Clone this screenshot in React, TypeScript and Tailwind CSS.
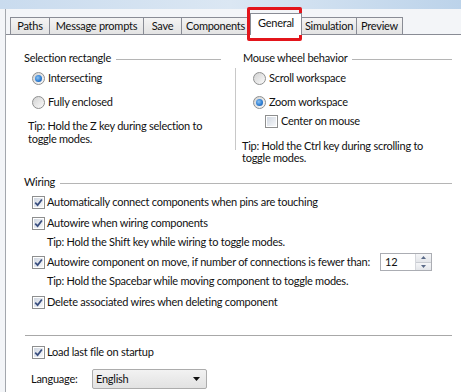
import React from 'react';

const Check = ({ checked }: { checked: boolean }) => (
  <span className="w-[13px] h-[13px] shrink-0 border border-[#8e8f8f] bg-white p-px flex">
    <span className="flex-1 bg-linear-to-br from-[#d0d7e1] to-[#f7f8fa] flex items-center justify-center">
      {checked && (
        <svg width="9" height="9" viewBox="0 0 9 9">
          <path d="M1.2 4.6 L3.6 7.1 L7.9 1.4" fill="none" stroke="#3a4f80" strokeWidth="1.7" />
        </svg>
      )}
    </span>
  </span>
);

const Radio = ({ on }: { on: boolean }) => (
  <span className="w-[13px] h-[13px] shrink-0 rounded-full border border-[#8e8f8f] bg-linear-to-br from-[#d2d2d2] to-[#fbfbfb] flex items-center justify-center">
    {on && <span className="w-[7px] h-[7px] rounded-full bg-[radial-gradient(circle_at_40%_40%,#8fc4f2,#2f7fd4_55%,#1a4f9a)]" />}
  </span>
);

const GroupHeader = ({ label, pl = '' }: { label: string; pl?: string }) => (
  <div className={`flex items-center h-[15px] whitespace-nowrap ${pl}`}>
    <span>{label}</span>
    <span className="flex-1 h-px bg-[#b5b5b5] ml-[5px] mt-[2px]" />
  </div>
);

const Row = ({ children, className = '' }: { children: React.ReactNode; className?: string }) => (
  <div className={`flex items-center h-[15px] whitespace-nowrap ${className}`}>{children}</div>
);

const tabs = [
  { label: 'Paths', w: 'w-[39px]' },
  { label: 'Message prompts', w: 'w-[94px]' },
  { label: 'Save', w: 'w-[38px]' },
  { label: 'Components', w: 'w-[69px]' },
];

const tabsAfter = [
  { label: 'Simulation', w: 'w-[55px]' },
  { label: 'Preview', w: 'w-[46px]' },
];

export default function App() {
  return (
    <div className="relative w-[461px] h-[392px] overflow-hidden bg-[#f3f5f8] text-[#111] text-[11px] tracking-[-0.25px] font-['Lato','Noto_Sans',sans-serif] flex flex-col">
      {/* window chrome */}
      <div className="h-[9px] shrink-0 bg-linear-to-r from-[#c9dbee] via-[#dbe7f3] to-[#bcd3ea]" />

      <div className="flex-1 flex flex-col ml-[5px] border-l border-[#a3a7ad]">
        {/* tabs */}
        <div className="h-[25px] shrink-0 flex items-end pl-[4px] whitespace-nowrap">
          {tabs.map((t, i) => (
            <div
              key={t.label}
              className={`${t.w} h-[17px] border-t border-l ${i === tabs.length - 1 ? 'border-r' : ''} border-[#898c95] bg-linear-to-b from-[#f4f4f4] to-[#e3e3e3] flex items-center justify-center`}
            >
              {t.label}
            </div>
          ))}
          <div className="relative z-10 w-[52px] h-[22px] -mb-px border border-b-0 border-[#898c95] bg-white flex items-center justify-center pb-[2px]">
            General
          </div>
          {tabsAfter.map((t) => (
            <div
              key={t.label}
              className={`${t.w} h-[17px] border-t border-r border-[#898c95] bg-linear-to-b from-[#f4f4f4] to-[#e3e3e3] flex items-center justify-center`}
            >
              {t.label}
            </div>
          ))}
        </div>

        {/* panel */}
        <div className="flex-1 bg-white border-t border-[#898c95] pl-[18px] pr-[9px] flex flex-col">
          <div className="flex mt-[16px]">
            <div className="w-[197px] flex flex-col">
              <GroupHeader label="Selection rectangle" />
              <Row className="mt-[5px] pl-[8px] gap-[3px]">
                <Radio on />
                <span>Intersecting</span>
              </Row>
              <Row className="mt-[9px] pl-[8px] gap-[3px]">
                <Radio on={false} />
                <span>Fully enclosed</span>
              </Row>
              <p className="mt-[9px] pl-[4px] leading-[13px] whitespace-nowrap">
                Tip: Hold the Z key during selection to
                <br />
                toggle modes.
              </p>
            </div>

            <div className="relative ml-[14px] flex-1 flex flex-col">
              <span className="absolute left-0 top-[17px] h-[82px] w-px bg-[#c8c8c8]" />
              <GroupHeader label="Mouse wheel behavior" pl="pl-[8px]" />
              <Row className="mt-[5px] pl-[18px] gap-[3px]">
                <Radio on={false} />
                <span>Scroll workspace</span>
              </Row>
              <Row className="mt-[9px] pl-[18px] gap-[3px]">
                <Radio on />
                <span>Zoom workspace</span>
              </Row>
              <Row className="mt-[4px] pl-[30px] gap-[3px]">
                <Check checked={false} />
                <span>Center on mouse</span>
              </Row>
              <p className="mt-[11px] pl-[7px] leading-[12px] whitespace-nowrap">
                Tip: Hold the Ctrl key during scrolling to
                <br />
                toggle modes.
              </p>
            </div>
          </div>

          <div className="mt-[11px] flex flex-col">
            <GroupHeader label="Wiring" />
            <Row className="mt-[5px] pl-[8px] gap-[2px]">
              <Check checked />
              <span>Automatically connect components when pins are touching</span>
            </Row>
            <Row className="mt-[6px] pl-[8px] gap-[2px]">
              <Check checked />
              <span>Autowire when wiring components</span>
            </Row>
            <Row className="mt-[4px] pl-[23px]">
              <span>Tip: Hold the Shift key while wiring to toggle modes.</span>
            </Row>
            <div className="mt-[3px] h-[18px] flex items-center pl-[8px] gap-[2px] whitespace-nowrap">
              <Check checked />
              <span>Autowire component on move, if number of connections is fewer than:</span>
              <div className="ml-auto mr-[20px] w-[52px] h-[18px] shrink-0 border border-[#abadb3] bg-white flex">
                <span className="flex-1 pl-[4px] flex items-center">12</span>
                <div className="w-[16px] flex flex-col border-l border-[#d5d7dc]">
                  <span className="flex-1 flex items-center justify-center bg-linear-to-b from-[#f5f6f8] to-[#e4e6ea] border-b border-[#c9ccd2]">
                    <svg width="5" height="3" viewBox="0 0 5 3"><path d="M0 3 L2.5 0 L5 3 Z" fill="#5a6a88" /></svg>
                  </span>
                  <span className="flex-1 flex items-center justify-center bg-linear-to-b from-[#f5f6f8] to-[#e4e6ea]">
                    <svg width="5" height="3" viewBox="0 0 5 3"><path d="M0 0 L5 0 L2.5 3 Z" fill="#5a6a88" /></svg>
                  </span>
                </div>
              </div>
            </div>
            <Row className="mt-[3px] pl-[23px]">
              <span>Tip: Hold the Spacebar while moving component to toggle modes.</span>
            </Row>
            <Row className="mt-[6px] pl-[8px] gap-[2px]">
              <Check checked />
              <span>Delete associated wires when deleting component</span>
            </Row>
          </div>

          <div className="mt-[25px] h-px bg-[#a8a8a8] ml-[1px]" />

          <Row className="mt-[9px] pl-[8px] gap-[2px]">
            <Check checked />
            <span>Load last file on startup</span>
          </Row>
          <div className="mt-[9px] h-[20px] flex items-center pl-[7px]">
            <span className="w-[61px]">Language:</span>
            <div className="w-[115px] h-[20px] border border-[#acacac] rounded-[2px] bg-linear-to-b from-[#f2f2f2] to-[#e2e2e2] flex items-center pl-[3px] pr-[6px]">
              <span className="flex-1">English</span>
              <svg width="7" height="4" viewBox="0 0 7 4"><path d="M0 0 L7 0 L3.5 4 Z" fill="#111" /></svg>
            </div>
          </div>
        </div>
      </div>

      {/* highlight annotation */}
      <div className="absolute left-[247px] top-[7px] w-[55px] h-[34px] border-[3px] border-[#e3151b] rounded-[2px]" />
    </div>
  );
}
